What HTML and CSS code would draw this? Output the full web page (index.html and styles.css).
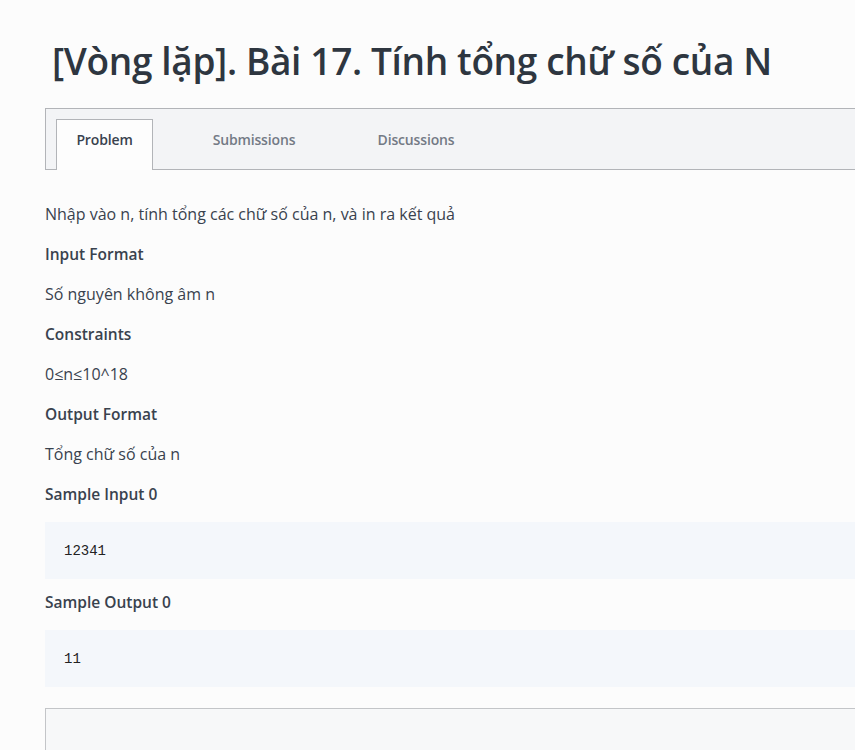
FILE: index.html
```html
<!DOCTYPE html>
<html lang="vi">
<head>
<meta charset="utf-8">
<link rel="stylesheet" href="styles.css">
</head>
<body>
<div class="page">
  <h1 class="title">[Vòng lặp]. Bài 17. Tính tổng chữ số của N</h1>
  <div class="tabs">
    <div class="tab active">Problem</div>
    <div class="tab">Submissions</div>
    <div class="tab">Discussions</div>
  </div>
  <div class="content">
    <p class="text">Nhập vào n, tính tổng các chữ số của n, và in ra kết quả</p>
    <h3 class="head">Input Format</h3>
    <p class="text">Số nguyên không âm n</p>
    <h3 class="head">Constraints</h3>
    <p class="text">0≤n≤10^18</p>
    <h3 class="head">Output Format</h3>
    <p class="text">Tổng chữ số của n</p>
    <h3 class="head">Sample Input 0</h3>
    <pre class="sample">12341</pre>
    <h3 class="head">Sample Output 0</h3>
    <pre class="sample">11</pre>
    <div class="editor"></div>
  </div>
</div>
</body>
</html>
```
FILE: styles.css
```css
html, body {
  margin: 0;
  padding: 0;
  background: #fcfcfc;
  font-family: "Open Sans", "Noto Sans", sans-serif;
  color: #39424e;
  overflow: hidden;
}
.page {
  padding-left: 45px;
}
.title {
  margin: 0;
  padding: 33px 0 0 7px;
  height: 76px;
  box-sizing: border-box;
  font-size: 37px;
  font-weight: 600;
  line-height: 56px;
  letter-spacing: -0.35px;
  color: #2e3640;
  white-space: nowrap;
}
.tabs {
  display: flex;
  height: 62px;
  box-sizing: border-box;
  margin-top: 32px;
  background: #f3f4f6;
  border-top: 1px solid #b2b4b8;
  border-bottom: 1px solid #b2b4b8;
  border-left: 1px solid #b2b4b8;
  padding: 10px 0 0 10px;
}
.tab {
  font-size: 14px;
  font-weight: 600;
  color: #737a85;
  line-height: 20px;
  padding: 11px 0 0;
  text-align: center;
  letter-spacing: -0.15px;
}
.tab.active {
  width: 97px;
  height: 51px;
  box-sizing: border-box;
  background: #fdfdfd;
  border: 1px solid #b2b4b8;
  border-bottom: none;
  color: #39424e;
  margin-bottom: -1px;
  padding-top: 10px;
}
.tab:nth-child(2) { width: 110px; margin-left: 46px; }
.tab:nth-child(3) { width: 110px; margin-left: 52px; }
.content {
  padding-top: 32px;
}
.text {
  margin: 0;
  height: 40px;
  font-size: 16px;
  line-height: 24px;
  color: #39424e;
}
.head {
  margin: 0;
  height: 40px;
  font-size: 15.5px;
  font-weight: 600;
  line-height: 24px;
  color: #39424e;
}
.sample {
  margin: 0 0 11px;
  height: 57px;
  box-sizing: border-box;
  background: #f4f7fb;
  padding: 20px 19px;
  font-family: "Liberation Mono", "DejaVu Sans Mono", monospace;
  font-size: 14px;
  line-height: 18px;
  color: #222;
}
.editor {
  margin-top: 21px;
  height: 60px;
  background: #f7f8f9;
  border-top: 1px solid #c3c5c8;
  border-left: 1px solid #c3c5c8;
}
```
